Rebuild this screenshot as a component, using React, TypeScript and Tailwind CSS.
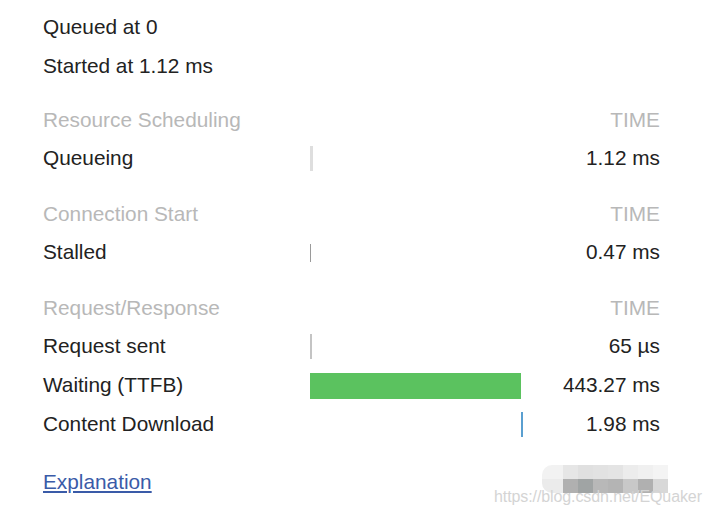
import React from "react";

type Row = {
  label: string;
  value: string;
  bar: { left: number; width: number; color: string; h: string };
};

type Section = { title: string; mt: string; rows: Row[] };

const sections: Section[] = [
  {
    title: "Resource Scheduling",
    mt: "mt-[15px]",
    rows: [
      { label: "Queueing", value: "1.12 ms", bar: { left: 0, width: 3, color: "bg-[#dedede]", h: "h-[25px]" } },
    ],
  },
  {
    title: "Connection Start",
    mt: "mt-[17px]",
    rows: [
      { label: "Stalled", value: "0.47 ms", bar: { left: 0, width: 1, color: "bg-[#9a9a9a]", h: "h-[18px]" } },
    ],
  },
  {
    title: "Request/Response",
    mt: "mt-[17px]",
    rows: [
      { label: "Request sent", value: "65 µs", bar: { left: 0, width: 2, color: "bg-[#c4c4c4]", h: "h-[25px]" } },
      { label: "Waiting (TTFB)", value: "443.27 ms", bar: { left: 0, width: 211, color: "bg-[#5bc25f]", h: "h-[26px]" } },
      { label: "Content Download", value: "1.98 ms", bar: { left: 211, width: 2, color: "bg-[#5a9fd0]", h: "h-[25px]" } },
    ],
  },
];

const TimingRow: React.FC<{ row: Row }> = ({ row }) => (
  <div className="grid grid-cols-[267px_1fr_auto] h-[39px] items-center">
    <div className="text-[#222]">{row.label}</div>
    <div className="relative h-full flex items-center">
      <div
        className={`absolute ${row.bar.color} ${row.bar.h}`}
        style={{ left: row.bar.left, width: row.bar.width }}
      />
    </div>
    <div className="text-right text-[#222]">{row.value}</div>
  </div>
);

const topBlocks = ["bg-[#e6e6e6]", "bg-[#e0e0e0]", "bg-[#e2e2e2]", "bg-[#e4e4e4]", "bg-[#ececec]", "bg-[#f0f0f0]", "bg-[#f4f4f4]"];
const bottomBlocks = ["bg-[#b0b0b0]", "bg-[#a0a4a4]", "bg-[#b8b8b8]", "bg-[#b4b4b4]", "bg-[#c8c8c8]", "bg-[#b0b0b0]", "bg-[#d8d8d8]"];

export default function App() {
  return (
    <div
      className="relative w-[711px] h-[516px] bg-white overflow-hidden text-[20.8px] leading-none"
      style={{ fontFamily: '"Liberation Sans", Arial, sans-serif' }}
    >
      <div className="pl-[43px] pr-[51px] pt-[8px]">
        <div className="h-[39px] flex items-center text-[#222]">Queued at 0</div>
        <div className="h-[39px] flex items-center text-[#222]">Started at 1.12 ms</div>

        {sections.map((s) => (
          <div key={s.title} className={s.mt}>
            <div className="h-[38px] flex items-center justify-between text-[#b8b8b8]">
              <span>{s.title}</span>
              <span>TIME</span>
            </div>
            {s.rows.map((r) => (
              <TimingRow key={r.label} row={r} />
            ))}
          </div>
        ))}

        <div className="mt-[19px] h-[39px] flex items-center">
          <a href="#" className="text-[#3a5ba8] underline underline-offset-2">
            Explanation
          </a>
        </div>
      </div>

      {/* pixelated smudge + watermark */}
      <div className="absolute left-[542px] top-[465px] flex">
        <div className="w-[21px] h-[28px] rounded-l-[10px] flex flex-col">
          <div className="h-[14px] bg-[#f2f2f2] rounded-tl-[10px]" />
          <div className="h-[14px] bg-[#ebebeb] rounded-bl-[10px]" />
        </div>
        <div className="flex flex-col">
          <div className="flex">
            {topBlocks.map((c, i) => (
              <div key={i} className={`w-[15px] h-[14px] ${c}`} />
            ))}
          </div>
          <div className="flex">
            {bottomBlocks.map((c, i) => (
              <div key={i} className={`w-[15px] h-[14px] ${c}`} />
            ))}
          </div>
        </div>
      </div>
      <div
        className="absolute left-[494px] top-[489px] text-[16px] leading-none text-[#d4d4d4] tracking-[-0.1px]"
        style={{ fontFamily: '"Liberation Sans", Arial, sans-serif' }}
      >
        https://blog.csdn.net/EQuaker
      </div>
    </div>
  );
}
